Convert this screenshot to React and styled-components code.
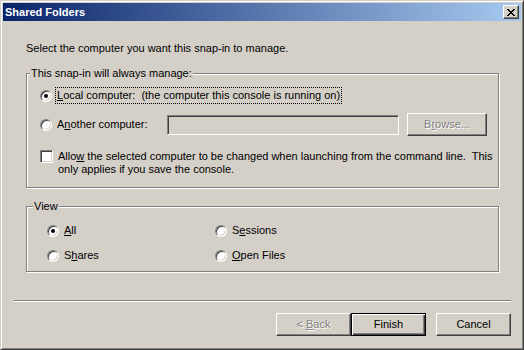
import React from 'react';
import styled, { createGlobalStyle, css } from 'styled-components';

const Global = createGlobalStyle`
  body {
    margin: 0;
    background: #d4d0c8;
  }
`;

const Window = styled.div`
  width: 524px;
  height: 350px;
  box-sizing: border-box;
  padding: 2px;
  background: #d4d0c8;
  border: 1px solid;
  border-color: #d4d0c8 #404040 #404040 #d4d0c8;
  box-shadow: inset 1px 1px #fff, inset -1px -1px #808080;
  display: flex;
  flex-direction: column;
  font: 11px/13px "Liberation Sans", Arial, sans-serif;
  color: #000;
`;

const TitleBar = styled.div`
  height: 18px;
  flex: none;
  display: flex;
  align-items: center;
  justify-content: space-between;
  padding: 0 2px;
  background: linear-gradient(to right, #0a246a, #a6caf0);
`;

const Title = styled.span`
  color: #fff;
  font-weight: bold;
  font-size: 11px;
`;

const bevel = css`
  box-sizing: border-box;
  background: #d4d0c8;
  border: 1px solid;
  border-color: #fff #404040 #404040 #fff;
  box-shadow: inset -1px -1px #808080, inset 1px 1px #d4d0c8;
`;

const CloseButton = styled.div`
  ${bevel};
  width: 16px;
  height: 14px;
  display: flex;
  align-items: center;
  justify-content: center;
`;

const Main = styled.div`
  padding: 21px 0 0 23px;
  display: flex;
  flex-direction: column;
`;

const Intro = styled.div`
  height: 13px;
`;

const Group = styled.fieldset`
  width: 473px;
  box-sizing: border-box;
  margin: ${p => p.$top}px 0 0;
  padding: 0 0 ${p => p.$bottom}px;
  min-inline-size: 0;
  border: 1px solid #808080;
  box-shadow: inset 1px 1px #fff, 1px 1px #fff;
`;

const Caption = styled.legend`
  margin-left: ${p => p.$indent}px;
  padding: 0 1px;
  line-height: 13px;
  background: #d4d0c8;
`;

const GroupBody = styled.div`
  padding-left: ${p => p.$left}px;
`;

const Row = styled.div`
  display: flex;
  align-items: ${p => (p.$top ? 'flex-start' : 'center')};
  margin-top: ${p => p.$gap}px;
  min-height: ${p => p.$h || 13}px;
`;

const Radio = styled.span`
  width: 12px;
  height: 12px;
  box-sizing: border-box;
  flex: none;
  position: relative;
  border-radius: 50%;
  border: 1px solid;
  border-color: #808080 #fff #fff #808080;
  box-shadow: inset 1px 1px #404040, inset -1px -1px #d4d0c8;
  background: #fff;

  &::after {
    content: '';
    display: ${p => (p.$on ? 'block' : 'none')};
    position: absolute;
    left: 3px;
    top: 3px;
    width: 4px;
    height: 4px;
    border-radius: 50%;
    background: #000;
  }
`;

const Check = styled.span`
  width: 13px;
  height: 13px;
  box-sizing: border-box;
  flex: none;
  border: 1px solid;
  border-color: #808080 #fff #fff #808080;
  box-shadow: inset 1px 1px #404040, inset -1px -1px #d4d0c8;
  background: #fff;
`;

const Label = styled.span`
  margin-left: ${p => p.$gap || 5}px;
  white-space: pre;
  ${p => p.$focus && css`
    outline: 1px dotted #000;
    outline-offset: 0;
    padding: 1px 1px;
    margin-left: 4px;
  `}
`;

const LabelSlot = styled.div`
  width: 127px;
  display: flex;
  align-items: center;
  flex: none;
`;

const TextBox = styled.div`
  width: 232px;
  height: 20px;
  box-sizing: border-box;
  border: 1px solid;
  border-color: #808080 #fff #fff #808080;
  box-shadow: inset 1px 1px #404040, inset -1px -1px #d4d0c8;
  background: #d4d0c8;
`;

const Button = styled.div`
  ${bevel};
  width: ${p => p.$w || 75}px;
  height: 23px;
  flex: none;
  display: flex;
  align-items: center;
  justify-content: center;
  white-space: pre;
  margin-left: ${p => p.$ml || 0}px;
  ${p => p.$default && css`
    border-color: #000;
    box-shadow: inset 1px 1px #fff, inset -1px -1px #404040, inset -2px -2px #808080;
  `}
  ${p => p.$disabled && css`
    color: #808080;
    text-shadow: 1px 1px #fff;
  `}
`;

const ViewGrid = styled.div`
  display: grid;
  grid-template-columns: 168px auto;
  row-gap: 12px;
  margin-top: 11px;
`;

const Option = styled.div`
  display: flex;
  align-items: center;
  height: 13px;
`;

const Separator = styled.div`
  margin: 28px 10px 0 11px;
  height: 0;
  border-top: 1px solid #808080;
  border-bottom: 1px solid #fff;
`;

const Footer = styled.div`
  display: flex;
  justify-content: flex-end;
  padding-right: 10px;
  margin-top: 11px;
`;

const CloseGlyph = () => (
  <svg width="8" height="7" viewBox="0 0 8 7" shapeRendering="crispEdges">
    <path
      fill="#000"
      d="M0 0h2v1H0zM6 0h2v1H6zM1 1h2v1H1zM5 1h2v1H5zM2 2h4v1H2zM3 3h2v1H3zM2 4h4v1H2zM1 5h2v1H1zM5 5h2v1H5zM0 6h2v1H0zM6 6h2v1H6z"
    />
  </svg>
);

const ViewOption = ({ on, children }) => (
  <Option>
    <Radio $on={on} />
    <Label>{children}</Label>
  </Option>
);

export default function App() {
  return (
    <>
      <Global />
      <Window>
        <TitleBar>
          <Title>Shared Folders</Title>
          <CloseButton>
            <CloseGlyph />
          </CloseButton>
        </TitleBar>
        <Main>
          <Intro>Select the computer you want this snap-in to manage.</Intro>
          <Group $top={12} $bottom={11}>
            <Caption $indent={3}>This snap-in will always manage:</Caption>
            <GroupBody $left={13}>
              <Row $gap={8} $h={15}>
                <Radio $on />
                <Label $focus>
                  <u>L</u>ocal computer:  (the computer this console is running on)
                </Label>
              </Row>
              <Row $gap={10} $h={23}>
                <LabelSlot>
                  <Radio />
                  <Label>
                    A<u>n</u>other computer:
                  </Label>
                </LabelSlot>
                <TextBox />
                <Button $w={80} $ml={8} $disabled>
                  <span>
                    B<u>r</u>owse...
                  </span>
                </Button>
              </Row>
              <Row $gap={14} $top>
                <Check />
                <Label $gap={5}>
                  Allo<u>w</u> the selected computer to be changed when launching from the command line.  This
                  {'\n'}only applies if you save the console.
                </Label>
              </Row>
            </GroupBody>
          </Group>
          <Group $top={12} $bottom={9}>
            <Caption $indent={6}>View</Caption>
            <GroupBody $left={20}>
              <ViewGrid>
                <ViewOption on>
                  <u>A</u>ll
                </ViewOption>
                <ViewOption>
                  S<u>e</u>ssions
                </ViewOption>
                <ViewOption>
                  S<u>h</u>ares
                </ViewOption>
                <ViewOption>
                  <u>O</u>pen Files
                </ViewOption>
              </ViewGrid>
            </GroupBody>
          </Group>
        </Main>
        <Separator />
        <Footer>
          <Button $disabled>
            <span>
                {'< '}
              <u>B</u>ack
            </span>
          </Button>
          <Button $default>Finish</Button>
          <Button $ml={10}>Cancel</Button>
        </Footer>
      </Window>
    </>
  );
}
